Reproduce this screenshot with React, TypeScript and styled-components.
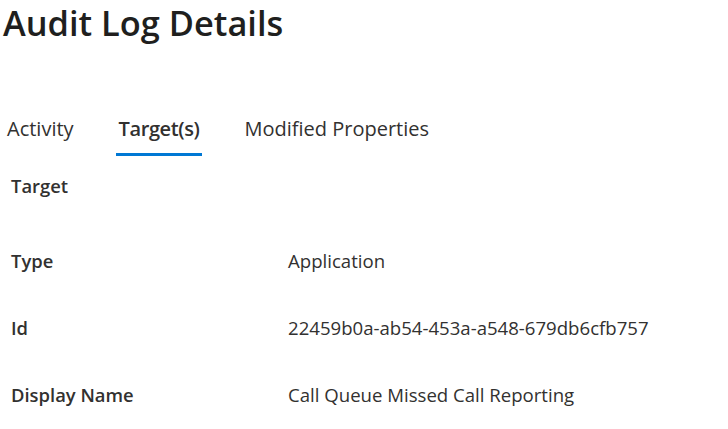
import React from "react";
import styled, { createGlobalStyle } from "styled-components";

const Global = createGlobalStyle`
  html, body { margin: 0; padding: 0; background: #ffffff; }
  body { font-family: "Open Sans", "Noto Sans", sans-serif; color: #252423; }
`;

const Page = styled.div`
  display: flex;
  flex-direction: column;
  width: 728px;
  height: 429px;
  overflow: hidden;
`;

const Title = styled.h1`
  margin: 0;
  padding: 0 0 0 3px;
  font-size: 34.4px;
  line-height: 46px;
  font-weight: 600;
  color: #201f1e;
`;

const TabBar = styled.div`
  display: flex;
  align-items: flex-start;
  gap: 39px;
  margin-top: 68px;
  padding-left: 4px;
`;

const Tab = styled.div<{ $active?: boolean }>`
  position: relative;
  padding: 0 3px;
  height: 42px;
  font-size: 20px;
  line-height: 30px;
  font-weight: ${(p) => (p.$active ? 600 : 400)};
  letter-spacing: ${(p) => (p.$active ? "-0.4px" : "0")};
  color: #323130;
  &::after {
    content: "";
    display: ${(p) => (p.$active ? "block" : "none")};
    position: absolute;
    left: 0;
    right: 0;
    bottom: 0;
    height: 3px;
    background: #0078d4;
  }
`;

const Section = styled.div`
  padding: 18px 0 0 11px;
  font-size: 18.4px;
  line-height: 24px;
  font-weight: 600;
  color: #323130;
`;

const Rows = styled.div`
  display: grid;
  grid-template-columns: 277px 1fr;
  grid-auto-rows: 67px;
  padding: 51px 0 0 11px;
`;

const Label = styled.div`
  font-size: 18.4px;
  line-height: 24px;
  font-weight: 600;
  color: #323130;
`;

const Value = styled.div`
  font-size: 18.6px;
  line-height: 24px;
  color: #323130;
`;

const rows: [string, string][] = [
  ["Type", "Application"],
  ["Id", "22459b0a-ab54-453a-a548-679db6cfb757"],
  ["Display Name", "Call Queue Missed Call Reporting"],
];

export default function App() {
  return (
    <Page>
      <Global />
      <Title>Audit Log Details</Title>
      <TabBar>
        <Tab>Activity</Tab>
        <Tab $active>Target(s)</Tab>
        <Tab>Modified Properties</Tab>
      </TabBar>
      <Section>Target</Section>
      <Rows>
        {rows.map(([l, v]) => (
          <React.Fragment key={l}>
            <Label>{l}</Label>
            <Value>{v}</Value>
          </React.Fragment>
        ))}
      </Rows>
    </Page>
  );
}
